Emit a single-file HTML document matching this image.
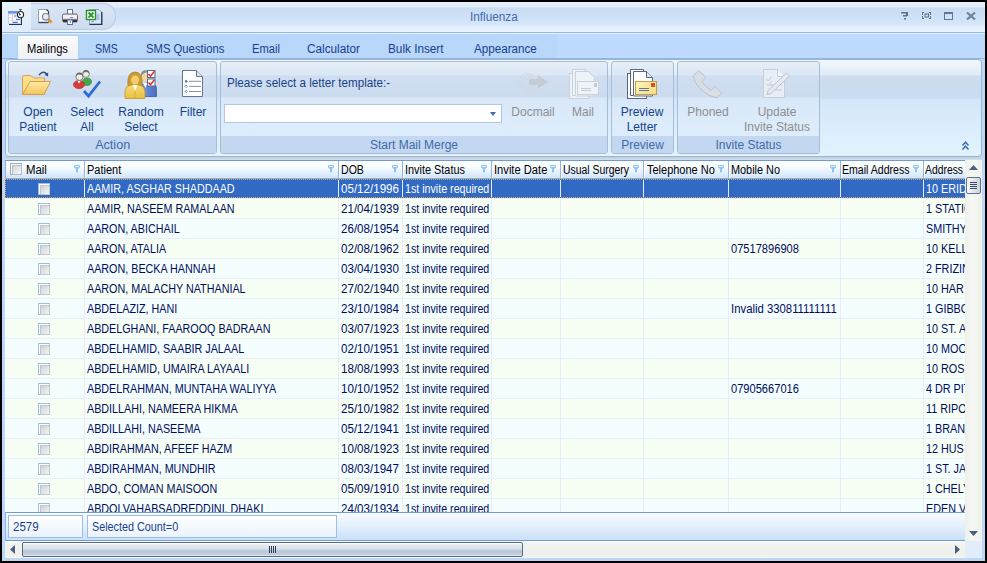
<!DOCTYPE html>
<html><head><meta charset="utf-8">
<style>
*{box-sizing:border-box;margin:0;padding:0}
html,body{width:987px;height:563px;overflow:hidden;background:#000;font-family:"Liberation Sans",sans-serif;position:relative}
.a{position:absolute}
#frame{left:2px;top:2px;width:983px;height:559px;background:#BFD7F6}
#title{left:2px;top:2px;width:983px;height:30px;background:linear-gradient(#E6F0FC 0,#E0ECFA 5px,#CADCF4 6px,#CEE0F7 14px,#D6E7FA 23px,#E0EEFD 24px,#E7F2FE 29px)}
#tline{left:2px;top:32px;width:983px;height:2px;border-top:1px solid #93B8E8;background:#E6F1FC}
#tabline{left:2px;top:58px;width:983px;height:1px;background:#8FB3E2}
#tabdark{left:2px;top:34px;width:555px;height:24px;background:#B9D6FB}
#ribshadow{left:5px;top:157px;width:977px;height:3px;background:linear-gradient(#BCCDE0,#D4E1EE)}
#appico{left:2px;top:2px;width:29px;height:30px;background:linear-gradient(#E9F2FC,#E0ECFA)}
#qat{left:31px;top:3px;width:85px;height:27px;border-radius:0 13px 13px 0;background:linear-gradient(#DBE6F4,#CEDCEF);border:1px solid #B6CBE8;border-left:none}
.tt{font-size:12px;line-height:12px;color:#3E6AAA;transform-origin:0 0;white-space:nowrap}
#tabs{left:2px;top:34px;width:983px;height:24px;background:#BEDBFF}
.tab{top:43px;font-size:12px;line-height:12px;color:#15428B;white-space:nowrap;transform-origin:0 0}
#tabsel{left:17px;top:35px;width:62px;height:24px;border:1px solid #B4D2F2;border-bottom:none;border-radius:2px 2px 0 0;background:linear-gradient(#FBFBFD,#F0F1F7)}
#ribbon{left:5px;top:59px;width:977px;height:98px;border:1px solid #9DB5D0;border-radius:4px;background:linear-gradient(#F2F7FD 0,#DFEBF7 15px,#CEDDEE 16px,#C9DCF1 38px,#D3E7FA 39px,#E2F3FF 94px)}
.grp{top:61px;height:93px;border:1px solid #A5BDD8;border-radius:3px;background:linear-gradient(#E6EFF9 0,#DBE7F5 13px,#CFDEF0 14px,#CCDCEF 35px,#D8E8F9 36px,#DEEDFB 74px)}
.glab{position:absolute;left:0;top:74px;width:100%;height:17px;background:#C3D8F0;font-size:12px;line-height:12px;color:#3E6AAA;text-align:center;padding-top:3px;white-space:nowrap}
.bt{top:105px;font-size:12px;line-height:15px;color:#15428B;text-align:center;white-space:nowrap}
.dis{color:#8E8E8E}
#combo{left:224px;top:104px;width:278px;height:19px;background:#fff;border:1px solid #B2C6E2}
#gridbg{left:5px;top:160px;width:977px;height:381px;background:#F4FEFF;border-top:1px solid #6F9BD1}
#hdr{left:5px;top:161px;width:960px;height:18px;background:linear-gradient(#FFFFFF 0,#F8FCFF 6px,#E6F2FE 11px,#CFE4FB 17px);border-bottom:1px solid #8DB3E6;border-left:1px solid #8DB3E6}
.hc{top:164px;font-size:12px;line-height:12px;transform-origin:0 0;color:#000;white-space:nowrap}
.hs{top:161px;width:2px;height:17px;border-left:1px solid #8FB4E2;background:#FFFFFF}
.flt{top:165px;width:8px;height:8px}
.cbh{width:12px;height:12px;border:1px solid #A2AAB6;background:#fff}
.cbh:after{content:"";position:absolute;left:1px;top:1px;width:8px;height:8px;border:1px solid #B8BEC8;background:linear-gradient(135deg,#D4D8DE,#F6F6F6)}
.row{left:5px;width:960px;height:20px;border-bottom:1px solid #E6EFFA}
.r0{background:#316AC5}
.ro{background:#F7FFF4}
.re{background:#F4FEFF}
.c{font-size:12px;line-height:12px;transform-origin:0 0;color:#000B5E;white-space:nowrap}
.w{color:#fff}
.vl{top:179px;width:1px;height:333px;background:#E4EDF9}
.cb{width:12px;height:12px;border:1px solid #A4BCDC;background:#fff}
.cb:after{content:"";position:absolute;left:1px;top:1px;width:8px;height:8px;border:1px solid #C2C6CE;background:linear-gradient(135deg,#CDD1D8,#F4F4F4)}
.focusv{width:1px;background:repeating-linear-gradient(180deg,#E3A33A 0 1px,#316AC5 1px 2px)}
.focus{height:1px;background:repeating-linear-gradient(90deg,#E3A33A 0 1px,#316AC5 1px 2px)}
#footer{left:5px;top:512px;width:960px;height:29px;border-top:1px solid #6F9BD1;border-bottom:1px solid #6F9BD1;border-left:1px solid #8DB3E6;background:linear-gradient(#F7FBFF 0,#E6F1FC 12px,#C9E1FA 27px)}
.fc{top:515px;height:23px;border:1px solid #9DBDE6;background:linear-gradient(#FFFFFF,#E9F3FD)}
.ft{font-size:12px;line-height:12px;color:#1A3F8F;white-space:nowrap;transform-origin:0 0}
#vs{left:965px;top:160px;width:17px;height:381px;background:linear-gradient(90deg,#ECEFEA,#F7F8F5 40%,#EDF0EB)}
#hs{left:5px;top:541px;width:960px;height:17px;background:linear-gradient(#FBFCFA 0,#F1F3EF 3px,#EDF0EB 14px,#F6F7F4 17px)}
#corner{left:965px;top:541px;width:17px;height:17px;background:#E1EDFB}
.thumbv{left:966px;top:177px;width:15px;height:17px;border:1px solid #5E7192;border-radius:2px;background:linear-gradient(90deg,#F8F9FA,#E3E7EB 50%,#C9D3DE)}
.thumbh{left:22px;top:542px;width:501px;height:15px;border:1px solid #566A8E;border-radius:2px;background:linear-gradient(#FFFFFF 0,#E6EAEE 2px,#D9E0E7 6px,#B7C6D8 8px,#C4D0DC 12px,#F2F4F6 13px)}

</style></head><body>
<div id="frame" class="a"></div>
<div id="title" class="a"></div>
<div id="tline" class="a"></div>
<div id="appico" class="a"></div>
<div id="qat" class="a"></div>
<div class="a tt" style="left:470px;top:11px;transform:scaleX(0.98)">Influenza</div>

<div id="tabs" class="a"></div>
<div id="tabdark" class="a"></div>
<div id="tabline" class="a"></div>
<div id="tabsel" class="a"></div>
<div class="a tab" style="left:27px;color:#000;transform:scaleX(0.93)">Mailings</div>
<div class="a tab" style="left:95px;transform:scaleX(0.88)">SMS</div>
<div class="a tab" style="left:146px;transform:scaleX(0.94)">SMS Questions</div>
<div class="a tab" style="left:252px;transform:scaleX(0.93)">Email</div>
<div class="a tab" style="left:307px;transform:scaleX(0.98)">Calculator</div>
<div class="a tab" style="left:388px;transform:scaleX(0.98)">Bulk Insert</div>
<div class="a tab" style="left:474px;transform:scaleX(0.97)">Appearance</div>

<div id="ribshadow" class="a"></div>
<div id="ribbon" class="a"></div>
<div class="a grp" style="left:8px;width:209px"><div class="glab"><span style="display:inline-block;transform:scaleX(1.05)">Action</span></div></div>
<div class="a grp" style="left:220px;width:388px"><div class="glab">Start Mail Merge</div></div>
<div class="a grp" style="left:611px;width:63px"><div class="glab">Preview</div></div>
<div class="a grp" style="left:677px;width:143px"><div class="glab">Invite Status</div></div>

<div class="a bt" style="left:8px;width:60px">Open<br>Patient</div>
<div class="a bt" style="left:57px;width:60px">Select<br>All</div>
<div class="a bt" style="left:111px;width:60px">Random<br>Select</div>
<div class="a bt" style="left:163px;width:60px">Filter</div>
<div class="a bt" style="left:227px;top:76px;transform:scaleX(0.97);transform-origin:0 0">Please select a letter template:-</div>
<div id="combo" class="a"><div class="a" style="left:265px;top:7px;width:0;height:0;border-left:3px solid transparent;border-right:3px solid transparent;border-top:4px solid #3D6CB0"></div></div>
<div class="a bt dis" style="left:503px;width:60px">Docmail</div>
<div class="a bt dis" style="left:553px;width:60px">Mail</div>
<div class="a bt" style="left:612px;width:60px">Preview<br>Letter</div>
<div class="a bt dis" style="left:678px;width:60px">Phoned</div>
<div class="a bt dis" style="left:737px;width:80px">Update<br>Invite Status</div>

<div id="gridbg" class="a"></div>
<div class="a" id="hdr"></div>
<div class="a hc" style="left:26px;top:164px;transform:scaleX(0.95);">Mail</div>
<div class="a flt" style="left:73px"><svg width="8" height="8" viewBox="0 0 8 8" style="display:block"><rect x="1" y="0" width="6" height="3" rx="1.2" fill="#8AC2F8"/><rect x="2" y="1" width="4" height="1" fill="#F4FAFF"/><path d="M2 3h4l-1 1.2v3h-2v-3z" fill="#8AC2F8"/></svg></div>
<div class="a hs" style="left:84px"></div>
<div class="a hc" style="left:87px;top:164px;transform:scaleX(0.917);">Patient</div>
<div class="a flt" style="left:327px"><svg width="8" height="8" viewBox="0 0 8 8" style="display:block"><rect x="1" y="0" width="6" height="3" rx="1.2" fill="#8AC2F8"/><rect x="2" y="1" width="4" height="1" fill="#F4FAFF"/><path d="M2 3h4l-1 1.2v3h-2v-3z" fill="#8AC2F8"/></svg></div>
<div class="a hs" style="left:338px"></div>
<div class="a hc" style="left:341px;top:164px;transform:scaleX(0.88);">DOB</div>
<div class="a flt" style="left:391px"><svg width="8" height="8" viewBox="0 0 8 8" style="display:block"><rect x="1" y="0" width="6" height="3" rx="1.2" fill="#8AC2F8"/><rect x="2" y="1" width="4" height="1" fill="#F4FAFF"/><path d="M2 3h4l-1 1.2v3h-2v-3z" fill="#8AC2F8"/></svg></div>
<div class="a hs" style="left:402px"></div>
<div class="a hc" style="left:405px;top:164px;transform:scaleX(0.908);">Invite Status</div>
<div class="a flt" style="left:480px"><svg width="8" height="8" viewBox="0 0 8 8" style="display:block"><rect x="1" y="0" width="6" height="3" rx="1.2" fill="#8AC2F8"/><rect x="2" y="1" width="4" height="1" fill="#F4FAFF"/><path d="M2 3h4l-1 1.2v3h-2v-3z" fill="#8AC2F8"/></svg></div>
<div class="a hs" style="left:491px"></div>
<div class="a hc" style="left:494px;top:164px;transform:scaleX(0.93);">Invite Date</div>
<div class="a flt" style="left:549px"><svg width="8" height="8" viewBox="0 0 8 8" style="display:block"><rect x="1" y="0" width="6" height="3" rx="1.2" fill="#8AC2F8"/><rect x="2" y="1" width="4" height="1" fill="#F4FAFF"/><path d="M2 3h4l-1 1.2v3h-2v-3z" fill="#8AC2F8"/></svg></div>
<div class="a hs" style="left:560px"></div>
<div class="a hc" style="left:563px;top:164px;transform:scaleX(0.867);">Usual Surgery</div>
<div class="a flt" style="left:632px"><svg width="8" height="8" viewBox="0 0 8 8" style="display:block"><rect x="1" y="0" width="6" height="3" rx="1.2" fill="#8AC2F8"/><rect x="2" y="1" width="4" height="1" fill="#F4FAFF"/><path d="M2 3h4l-1 1.2v3h-2v-3z" fill="#8AC2F8"/></svg></div>
<div class="a hs" style="left:643px"></div>
<div class="a hc" style="left:647px;top:164px;transform:scaleX(0.915);">Telephone No</div>
<div class="a flt" style="left:717px"><svg width="8" height="8" viewBox="0 0 8 8" style="display:block"><rect x="1" y="0" width="6" height="3" rx="1.2" fill="#8AC2F8"/><rect x="2" y="1" width="4" height="1" fill="#F4FAFF"/><path d="M2 3h4l-1 1.2v3h-2v-3z" fill="#8AC2F8"/></svg></div>
<div class="a hs" style="left:728px"></div>
<div class="a hc" style="left:731px;top:164px;transform:scaleX(0.906);">Mobile No</div>
<div class="a flt" style="left:829px"><svg width="8" height="8" viewBox="0 0 8 8" style="display:block"><rect x="1" y="0" width="6" height="3" rx="1.2" fill="#8AC2F8"/><rect x="2" y="1" width="4" height="1" fill="#F4FAFF"/><path d="M2 3h4l-1 1.2v3h-2v-3z" fill="#8AC2F8"/></svg></div>
<div class="a hs" style="left:840px"></div>
<div class="a hc" style="left:842px;top:164px;transform:scaleX(0.88);">Email Address</div>
<div class="a flt" style="left:912px"><svg width="8" height="8" viewBox="0 0 8 8" style="display:block"><rect x="1" y="0" width="6" height="3" rx="1.2" fill="#8AC2F8"/><rect x="2" y="1" width="4" height="1" fill="#F4FAFF"/><path d="M2 3h4l-1 1.2v3h-2v-3z" fill="#8AC2F8"/></svg></div>
<div class="a hs" style="left:923px"></div>
<div class="a hc" style="left:925px;top:164px;transform:scaleX(0.864);">Address</div>
<div class="a cbh" style="left:10px;top:163px"></div>
<div class="a row r0" style="top:179px"></div>
<div class="a cb" style="left:38px;top:183px"></div>
<div class="a c w" style="left:87px;top:183px;transform:scaleX(0.896);">AAMIR, ASGHAR SHADDAAD</div>
<div class="a c w" style="left:341px;top:183px;transform:scaleX(0.966);">05/12/1996</div>
<div class="a c w" style="left:405px;top:183px;transform:scaleX(0.89);">1st invite required</div>
<div class="a" style="left:926px;top:183px;width:39px;height:14px;overflow:hidden"><div class="c w" style="transform:scaleX(0.9)">10 ERIDGE</div></div>
<div class="a row ro" style="top:199px"></div>
<div class="a cb" style="left:38px;top:203px"></div>
<div class="a c" style="left:87px;top:203px;transform:scaleX(0.896);">AAMIR, NASEEM RAMALAAN</div>
<div class="a c" style="left:341px;top:203px;transform:scaleX(0.966);">21/04/1939</div>
<div class="a c" style="left:405px;top:203px;transform:scaleX(0.89);">1st invite required</div>
<div class="a" style="left:926px;top:203px;width:39px;height:14px;overflow:hidden"><div class="c" style="transform:scaleX(0.9)">1 STATION</div></div>
<div class="a row re" style="top:219px"></div>
<div class="a cb" style="left:38px;top:223px"></div>
<div class="a c" style="left:87px;top:223px;transform:scaleX(0.896);">AARON, ABICHAIL</div>
<div class="a c" style="left:341px;top:223px;transform:scaleX(0.966);">26/08/1954</div>
<div class="a c" style="left:405px;top:223px;transform:scaleX(0.89);">1st invite required</div>
<div class="a" style="left:926px;top:223px;width:39px;height:14px;overflow:hidden"><div class="c" style="transform:scaleX(0.9)">SMITHY</div></div>
<div class="a row ro" style="top:239px"></div>
<div class="a cb" style="left:38px;top:243px"></div>
<div class="a c" style="left:87px;top:243px;transform:scaleX(0.896);">AARON, ATALIA</div>
<div class="a c" style="left:341px;top:243px;transform:scaleX(0.966);">02/08/1962</div>
<div class="a c" style="left:405px;top:243px;transform:scaleX(0.89);">1st invite required</div>
<div class="a c" style="left:731px;top:243px;transform:scaleX(0.925);">07517896908</div>
<div class="a" style="left:926px;top:243px;width:39px;height:14px;overflow:hidden"><div class="c" style="transform:scaleX(0.9)">10 KELLY</div></div>
<div class="a row re" style="top:259px"></div>
<div class="a cb" style="left:38px;top:263px"></div>
<div class="a c" style="left:87px;top:263px;transform:scaleX(0.896);">AARON, BECKA HANNAH</div>
<div class="a c" style="left:341px;top:263px;transform:scaleX(0.966);">03/04/1930</div>
<div class="a c" style="left:405px;top:263px;transform:scaleX(0.89);">1st invite required</div>
<div class="a" style="left:926px;top:263px;width:39px;height:14px;overflow:hidden"><div class="c" style="transform:scaleX(0.9)">2 FRIZINGHALL</div></div>
<div class="a row ro" style="top:279px"></div>
<div class="a cb" style="left:38px;top:283px"></div>
<div class="a c" style="left:87px;top:283px;transform:scaleX(0.896);">AARON, MALACHY NATHANIAL</div>
<div class="a c" style="left:341px;top:283px;transform:scaleX(0.966);">27/02/1940</div>
<div class="a c" style="left:405px;top:283px;transform:scaleX(0.89);">1st invite required</div>
<div class="a" style="left:926px;top:283px;width:39px;height:14px;overflow:hidden"><div class="c" style="transform:scaleX(0.9)">10 HAR</div></div>
<div class="a row re" style="top:299px"></div>
<div class="a cb" style="left:38px;top:303px"></div>
<div class="a c" style="left:87px;top:303px;transform:scaleX(0.896);">ABDELAZIZ, HANI</div>
<div class="a c" style="left:341px;top:303px;transform:scaleX(0.966);">23/10/1984</div>
<div class="a c" style="left:405px;top:303px;transform:scaleX(0.89);">1st invite required</div>
<div class="a c" style="left:731px;top:303px;transform:scaleX(0.945);">Invalid 330811111111</div>
<div class="a" style="left:926px;top:303px;width:39px;height:14px;overflow:hidden"><div class="c" style="transform:scaleX(0.9)">1 GIBBON</div></div>
<div class="a row ro" style="top:319px"></div>
<div class="a cb" style="left:38px;top:323px"></div>
<div class="a c" style="left:87px;top:323px;transform:scaleX(0.896);">ABDELGHANI, FAAROOQ BADRAAN</div>
<div class="a c" style="left:341px;top:323px;transform:scaleX(0.966);">03/07/1923</div>
<div class="a c" style="left:405px;top:323px;transform:scaleX(0.89);">1st invite required</div>
<div class="a" style="left:926px;top:323px;width:39px;height:14px;overflow:hidden"><div class="c" style="transform:scaleX(0.9)">10 ST. ANNE</div></div>
<div class="a row re" style="top:339px"></div>
<div class="a cb" style="left:38px;top:343px"></div>
<div class="a c" style="left:87px;top:343px;transform:scaleX(0.896);">ABDELHAMID, SAABIR JALAAL</div>
<div class="a c" style="left:341px;top:343px;transform:scaleX(0.966);">02/10/1951</div>
<div class="a c" style="left:405px;top:343px;transform:scaleX(0.89);">1st invite required</div>
<div class="a" style="left:926px;top:343px;width:39px;height:14px;overflow:hidden"><div class="c" style="transform:scaleX(0.9)">10 MOOR</div></div>
<div class="a row ro" style="top:359px"></div>
<div class="a cb" style="left:38px;top:363px"></div>
<div class="a c" style="left:87px;top:363px;transform:scaleX(0.896);">ABDELHAMID, UMAIRA LAYAALI</div>
<div class="a c" style="left:341px;top:363px;transform:scaleX(0.966);">18/08/1993</div>
<div class="a c" style="left:405px;top:363px;transform:scaleX(0.89);">1st invite required</div>
<div class="a" style="left:926px;top:363px;width:39px;height:14px;overflow:hidden"><div class="c" style="transform:scaleX(0.9)">10 ROS</div></div>
<div class="a row re" style="top:379px"></div>
<div class="a cb" style="left:38px;top:383px"></div>
<div class="a c" style="left:87px;top:383px;transform:scaleX(0.896);">ABDELRAHMAN, MUNTAHA WALIYYA</div>
<div class="a c" style="left:341px;top:383px;transform:scaleX(0.966);">10/10/1952</div>
<div class="a c" style="left:405px;top:383px;transform:scaleX(0.89);">1st invite required</div>
<div class="a c" style="left:731px;top:383px;transform:scaleX(0.925);">07905667016</div>
<div class="a" style="left:926px;top:383px;width:39px;height:14px;overflow:hidden"><div class="c" style="transform:scaleX(0.9)">4 DR PIT</div></div>
<div class="a row ro" style="top:399px"></div>
<div class="a cb" style="left:38px;top:403px"></div>
<div class="a c" style="left:87px;top:403px;transform:scaleX(0.896);">ABDILLAHI, NAMEERA HIKMA</div>
<div class="a c" style="left:341px;top:403px;transform:scaleX(0.966);">25/10/1982</div>
<div class="a c" style="left:405px;top:403px;transform:scaleX(0.89);">1st invite required</div>
<div class="a" style="left:926px;top:403px;width:39px;height:14px;overflow:hidden"><div class="c" style="transform:scaleX(0.9)">11 RIPON</div></div>
<div class="a row re" style="top:419px"></div>
<div class="a cb" style="left:38px;top:423px"></div>
<div class="a c" style="left:87px;top:423px;transform:scaleX(0.896);">ABDILLAHI, NASEEMA</div>
<div class="a c" style="left:341px;top:423px;transform:scaleX(0.966);">05/12/1941</div>
<div class="a c" style="left:405px;top:423px;transform:scaleX(0.89);">1st invite required</div>
<div class="a" style="left:926px;top:423px;width:39px;height:14px;overflow:hidden"><div class="c" style="transform:scaleX(0.9)">1 BRANT</div></div>
<div class="a row ro" style="top:439px"></div>
<div class="a cb" style="left:38px;top:443px"></div>
<div class="a c" style="left:87px;top:443px;transform:scaleX(0.896);">ABDIRAHMAN, AFEEF HAZM</div>
<div class="a c" style="left:341px;top:443px;transform:scaleX(0.966);">10/08/1923</div>
<div class="a c" style="left:405px;top:443px;transform:scaleX(0.89);">1st invite required</div>
<div class="a" style="left:926px;top:443px;width:39px;height:14px;overflow:hidden"><div class="c" style="transform:scaleX(0.9)">12 HUS</div></div>
<div class="a row re" style="top:459px"></div>
<div class="a cb" style="left:38px;top:463px"></div>
<div class="a c" style="left:87px;top:463px;transform:scaleX(0.896);">ABDIRAHMAN, MUNDHIR</div>
<div class="a c" style="left:341px;top:463px;transform:scaleX(0.966);">08/03/1947</div>
<div class="a c" style="left:405px;top:463px;transform:scaleX(0.89);">1st invite required</div>
<div class="a" style="left:926px;top:463px;width:39px;height:14px;overflow:hidden"><div class="c" style="transform:scaleX(0.9)">1 ST. JAMES</div></div>
<div class="a row ro" style="top:479px"></div>
<div class="a cb" style="left:38px;top:483px"></div>
<div class="a c" style="left:87px;top:483px;transform:scaleX(0.896);">ABDO, COMAN MAISOON</div>
<div class="a c" style="left:341px;top:483px;transform:scaleX(0.966);">05/09/1910</div>
<div class="a c" style="left:405px;top:483px;transform:scaleX(0.89);">1st invite required</div>
<div class="a" style="left:926px;top:483px;width:39px;height:14px;overflow:hidden"><div class="c" style="transform:scaleX(0.9)">1 CHELYS</div></div>
<div class="a row re" style="top:499px"></div>
<div class="a cb" style="left:38px;top:503px"></div>
<div class="a c" style="left:87px;top:503px;transform:scaleX(0.896);">ABDOLVAHABSADREDDINI, DHAKI</div>
<div class="a c" style="left:341px;top:503px;transform:scaleX(0.966);">24/03/1934</div>
<div class="a c" style="left:405px;top:503px;transform:scaleX(0.89);">1st invite required</div>
<div class="a" style="left:926px;top:503px;width:39px;height:14px;overflow:hidden"><div class="c" style="transform:scaleX(0.9)">EDEN VALE</div></div>
<div class="a vl" style="left:84px"></div>
<div class="a vl" style="left:338px"></div>
<div class="a vl" style="left:402px"></div>
<div class="a vl" style="left:491px"></div>
<div class="a vl" style="left:560px"></div>
<div class="a vl" style="left:643px"></div>
<div class="a vl" style="left:728px"></div>
<div class="a vl" style="left:840px"></div>
<div class="a vl" style="left:923px"></div>
<div class="a focus" style="left:5px;top:179px;width:960px;"></div>
<div class="a focusv" style="left:5px;top:179px;height:19px;"></div>
<div class="a focus" style="left:5px;top:197px;width:960px;"></div>
<div id="footer" class="a"></div>
<div class="a fc" style="left:8px;width:75px"></div>
<div class="a fc" style="left:87px;width:250px"></div>
<div class="a ft" style="left:13px;top:521px;transform:scaleX(0.96)">2579</div>
<div class="a ft" style="left:92px;top:521px;transform:scaleX(0.9)">Selected Count=0</div>
<div id="vs" class="a"></div>
<div class="a thumbv"></div>
<div id="hs" class="a"></div>
<div class="a thumbh"></div>
<div id="corner" class="a"></div>
<svg class="a" style="left:4px;top:6px" width="24" height="22" viewBox="0 0 24 22">
 <rect x="5" y="6" width="13" height="13" fill="#24374F"/>
 <rect x="4" y="5" width="13" height="13" fill="#C9D3E3"/>
 <rect x="4" y="5" width="13" height="2.5" fill="#6C9BE6"/>
 <rect x="5" y="8.5" width="3" height="2.5" fill="#fff"/><rect x="9" y="8.5" width="7" height="2.5" fill="#fff"/>
 <rect x="5" y="11.5" width="3" height="2.5" fill="#fff"/><rect x="9" y="11.5" width="7" height="2.5" fill="#fff"/>
 <rect x="5" y="14.5" width="3" height="2.5" fill="#fff"/><rect x="9" y="14.5" width="7" height="2.5" fill="#fff"/>
 <rect x="10" y="9.5" width="2.5" height="1" fill="#B0489C"/><rect x="12" y="12.8" width="4" height="1.2" fill="#4C86E8"/><rect x="9" y="15.8" width="5" height="1.2" fill="#3A70D8"/>
 <path d="M15 3.5h3M16.5 3.5v2" stroke="#666" stroke-width="1"/>
 <circle cx="16.5" cy="8.6" r="3.1" fill="#fff" stroke="#222" stroke-width="1.1"/>
 <path d="M16.5 8.6L15.3 7.3L15.8 9.2Z" fill="#111" stroke="#111" stroke-width="0.8"/>
</svg>
<svg class="a" style="left:30px;top:4px" width="30" height="24" viewBox="0 0 30 24">
 <path d="M8.5 5.5h8l2 2v11h-10z" fill="#fff" stroke="#8EA2C4" stroke-width="1"/>
 <path d="M8.5 18.5h10" stroke="#34466A" stroke-width="1.4"/>
 <path d="M16.5 5.5l2 2v3" stroke="#34466A" stroke-width="1.2" fill="none"/>
 <path d="M18.5 15.5l3 3" stroke="#E8901E" stroke-width="2.6"/>
 <circle cx="15.8" cy="12.8" r="3.3" fill="#E4ECF6" stroke="#7D8694" stroke-width="1.2"/>
</svg>
<svg class="a" style="left:58px;top:4px" width="30" height="24" viewBox="0 0 30 24">
 <rect x="9.5" y="5.5" width="5" height="5" fill="#fff" stroke="#5A6F94" stroke-width="1"/>
 <rect x="4.5" y="10" width="15" height="8" rx="1.5" fill="#DCD6D8" stroke="#6B6D78" stroke-width="1"/>
 <rect x="5" y="11" width="14" height="3" fill="#F4F0F0"/>
 <rect x="5" y="15.5" width="14" height="2.5" fill="#3A3034"/>
 <rect x="12" y="13" width="3" height="1" fill="#4A9AF0"/>
 <rect x="9.5" y="16" width="5" height="4.5" fill="#fff" stroke="#5A6F94" stroke-width="1"/>
 <circle cx="12.3" cy="18" r="0.8" fill="#2A5CD8"/>
</svg>
<svg class="a" style="left:84px;top:4px" width="30" height="24" viewBox="0 0 30 24">
 <path d="M5.5 5.5h9.5l2.5 2.5v12.5h-12z" fill="#D8E6FA" stroke="#8CA6CC" stroke-width="1"/>
 <path d="M5.5 20.3h12.3V8" stroke="#223450" stroke-width="1.3" fill="none"/>
 <path d="M12.5 11h3M12.5 13h3M12.5 15h3M7 17.5h3" stroke="#8AA4CC" stroke-width="1"/>
 <rect x="2.5" y="6.5" width="9" height="9" fill="#fff" stroke="#2E8A2E" stroke-width="1.4"/>
 <path d="M4.5 8.5l5 5M9.5 8.5l-5 5" stroke="#2E9A38" stroke-width="2"/>
</svg>
<!-- window controls -->
<svg class="a" style="left:895px;top:6px" width="90" height="20" viewBox="0 0 90 20">
 <g fill="#5F6E82">
  <rect x="6" y="6" width="7" height="1.5"/><rect x="11" y="7" width="2" height="3"/><rect x="8" y="9" width="4" height="1.5"/><rect x="9" y="12" width="2" height="1.5"/>
 </g>
 <g fill="#5F6E82">
  <path d="M27 6h2v1h-1v2h-1zM36 6h-2v1h1v2h1zM27 13h2v-1h-1v-2h-1zM36 13h-2v-1h1v-2h1z"/>
  <rect x="30" y="8" width="3.5" height="3" fill="none" stroke="#5F6E82" stroke-width="1"/>
 </g>
 <rect x="49.5" y="6.5" width="8" height="7" fill="none" stroke="#657790" stroke-width="1"/>
 <rect x="49" y="6" width="9" height="2" fill="#657790"/>
 <path d="M72 6.5l8 7M80 6.5l-8 7" stroke="#6E8199" stroke-width="2.2"/>
</svg>
<!-- ribbon icons -->
<svg class="a" style="left:18px;top:66px" width="40" height="36" viewBox="0 0 40 36">
 <defs><linearGradient id="fo" x1="0" y1="0" x2="0" y2="1"><stop offset="0" stop-color="#FFEBA8"/><stop offset="1" stop-color="#F4C357"/></linearGradient></defs>
 <path d="M4.5 11q0-1.5 1.5-1.5h7l2.5 2.5h11v16.5h-22z" fill="#FBE08C" stroke="#D8A25A" stroke-width="1"/>
 <path d="M12 15.5h20.5l-6.5 13h-21.5z" fill="url(#fo)" stroke="#D89C4C" stroke-width="1"/>
 <path d="M21 9q4-5 8-1" stroke="#3B5278" stroke-width="1.5" fill="none"/>
 <path d="M26.5 8.8l3.5 1.6l0.3-3.8z" fill="#3B5278"/>
</svg>
<svg class="a" style="left:68px;top:66px" width="40" height="36" viewBox="0 0 40 36">
 <ellipse cx="19" cy="15.8" rx="4.6" ry="3.8" fill="#44A844" stroke="#2E8A30" stroke-width="0.6"/>
 <circle cx="18" cy="8" r="3.4" fill="#ECECE8" stroke="#7C7C7C" stroke-width="0.9"/>
 <path d="M14.6 8q0-4 3.4-4q3.4 0 3.4 4q-1-2-3.4-2q-2.4 0-3.4 2z" fill="#6E6E6E"/>
 <ellipse cx="11" cy="18.6" rx="5.6" ry="4" fill="#D63C3A" stroke="#B02828" stroke-width="0.6"/>
 <path d="M9.5 15l1.5 2.5l1.5-2.5z" fill="#fff"/>
 <circle cx="11.5" cy="10.8" r="3.6" fill="#ECECE8" stroke="#7C7C7C" stroke-width="0.9"/>
 <path d="M7.9 10.8q0-4.2 3.6-4.2q3.6 0 3.6 4.2q-1-2.2-3.6-2.2q-2.6 0-3.6 2.2z" fill="#6E6E6E"/>
 <path d="M16 25l4.5 5l11.5-14.5" stroke="#2C6CD8" stroke-width="2.8" fill="none"/>
</svg>
<svg class="a" style="left:122px;top:66px" width="40" height="36" viewBox="0 0 40 36">
 <defs><linearGradient id="bl" x1="0" y1="0" x2="1" y2="0"><stop offset="0" stop-color="#7A9AE0"/><stop offset="1" stop-color="#4A6CC0"/></linearGradient>
 <linearGradient id="yl" x1="0" y1="0" x2="0" y2="1"><stop offset="0" stop-color="#F8DC70"/><stop offset="1" stop-color="#E8C040"/></linearGradient></defs>
 <path d="M18.5 30.5v-7q0-6 6-6.5h4q6 .5 6 6.5v7z" fill="url(#bl)" stroke="#3E5CA0" stroke-width="0.8"/>
 <path d="M21 17l2.5 5l2-5z" fill="#fff"/>
 <ellipse cx="22.5" cy="11.5" rx="3.6" ry="4" fill="#F6D69A"/>
 <path d="M18.8 11q-.5-6.5 4.5-6.8q4 0 4.5 3.5q-2-1.5-4.5-1q-2.5 .5-4.5 4.3z" fill="#8C8C8C"/>
 <rect x="25.5" y="4.5" width="7.5" height="7" fill="#fff" stroke="#5A6C8C" stroke-width="1"/>
 <rect x="25.5" y="13" width="7.5" height="7" fill="#fff" stroke="#5A6C8C" stroke-width="1"/>
 <path d="M26.5 8l2 2.2l4-5M26.5 16.5l2 2.2l4-5" stroke="#E02A20" stroke-width="1.5" fill="none"/>
 <path d="M6 21q-1.5-15 7-15q8.5 0 7 15z" fill="#C99A38" stroke="#A87C28" stroke-width="0.7"/>
 <path d="M3 32.5v-6q0-7 7-7.5h6q7 .5 7 7.5v6z" fill="url(#yl)" stroke="#C09828" stroke-width="0.8"/>
 <path d="M10.5 19l2.5 6l2.5-6z" fill="#FAFAF2"/>
 <path d="M13 25v7" stroke="#D0A838" stroke-width="0.8"/>
 <ellipse cx="13" cy="14" rx="4" ry="4.6" fill="#F9CC66"/>
</svg>
<svg class="a" style="left:176px;top:66px" width="36" height="36" viewBox="0 0 36 36">
 <path d="M6.5 4.5h14l6 6v20h-20z" fill="#fff" stroke="#66788F" stroke-width="1"/>
 <path d="M20.5 4.5v6h6" fill="#D8E4F4" stroke="#66788F" stroke-width="1"/>
 <g fill="#fff" stroke="#66788F" stroke-width="0.9"><path d="M10.2 14l1.2 1.2l-1.2 1.2l-1.2-1.2z" fill="#66788F"/><path d="M10.2 19.2l1.2 1.2l-1.2 1.2l-1.2-1.2z"/><path d="M10.2 24.3l1.2 1.2l-1.2 1.2l-1.2-1.2z"/></g>
 <path d="M13 15.3h12M13 20.4h12M13 25.5h12" stroke="#8494AA" stroke-width="1"/>
</svg>
<svg class="a" style="left:514px;top:66px" width="40" height="36" viewBox="0 0 40 36">
 <g fill="none" stroke="#D2D9E2" stroke-width="1">
 <path d="M3.5 15.5l8-9l9 8.5l-8 14z"/><path d="M6.5 16.5l8-9.5l9 8.5l-7.5 14z"/><path d="M9.5 17.5l8-10l9 8.5l-8 14z"/>
 </g>
 <path d="M15 13h9v-3.5l10.5 6.5l-10.5 6.5v-3.5h-9z" fill="#C4CCD6"/>
</svg>
<svg class="a" style="left:566px;top:66px" width="36" height="36" viewBox="0 0 36 36">
 <g fill="#EEF3F8" stroke="#C9D1DB" stroke-width="1">
 <rect x="3.5" y="7.5" width="19" height="25"/><path d="M6.5 3.5h13v26h-13z"/><path d="M9.5 5.5h13l6 6v18.5h-19z"/>
 <rect x="11.5" y="15.5" width="21" height="13"/>
 </g>
 <rect x="28" y="17" width="3" height="4" fill="#C4CCD6"/>
 <path d="M15 22.5h10M15 24.5h10" stroke="#C4CCD6" stroke-width="1"/>
</svg>
<svg class="a" style="left:624px;top:66px" width="36" height="36" viewBox="0 0 36 36">
 <defs><linearGradient id="env" x1="0" y1="0" x2="1" y2="1"><stop offset="0" stop-color="#FFF4B8"/><stop offset="1" stop-color="#F6DC80"/></linearGradient></defs>
 <g fill="#fff" stroke="#56677E" stroke-width="1">
 <rect x="3.5" y="7.5" width="19" height="25"/><path d="M6.5 3.5h13v26h-13z"/><path d="M9.5 5.5h13l6 6v18.5h-19z"/>
 </g>
 <path d="M22.5 5.5v6h6" fill="#DCE6F4" stroke="#56677E" stroke-width="1"/>
 <rect x="11.5" y="15.5" width="21" height="13" fill="url(#env)" stroke="#C2A04A" stroke-width="1"/>
 <rect x="27" y="17" width="4" height="4" fill="#E24A2A"/>
 <path d="M15 22.5h10M15 24.5h10" stroke="#5C78A8" stroke-width="1"/>
</svg>
<svg class="a" style="left:690px;top:66px" width="36" height="36" viewBox="0 0 36 36">
 <path d="M8.5 4.5l7.5 7l-4 4q2.5 5 9 9l4-4l7 7l-5 4q-9 -1 -17 -9q-7 -8 -6.5 -13z" fill="#D9DEE5" stroke="#BAC2CD" stroke-width="1"/>
</svg>
<svg class="a" style="left:758px;top:66px" width="36" height="36" viewBox="0 0 36 36">
 <path d="M5.5 3.5h14l7 7v21h-21z" fill="#E8EEF5" stroke="#C6CED8" stroke-width="1"/>
 <path d="M19.5 3.5v7h7" fill="#F4F7FA" stroke="#C6CED8" stroke-width="1"/>
 <path d="M8.5 13l1.5 2l3.5-4.5M8.5 18l1.5 2l3.5-4.5M12 19h12M12 24h12" stroke="#C2CAD4" stroke-width="1" fill="none"/>
 <path d="M10 24.5l18.5-17.5l3 3l-18.5 17.5l-4 1z" fill="#E4E9EF" stroke="#BCC4CE" stroke-width="1"/>
</svg>
<!-- collapse chevron -->
<svg class="a" style="left:955px;top:136px" width="20" height="20" viewBox="0 0 20 20">
 <path d="M7.5 9.5l3-3.3l3 3.3M7.5 13.5l3-3.3l3 3.3" stroke="#3D6DB0" stroke-width="1.5" fill="none"/>
</svg>
<!-- scroll arrows -->
<svg class="a" style="left:965px;top:160px" width="17" height="381" viewBox="0 0 17 381">
 <path d="M4 10h9l-4.5-5z" fill="#4D5E80"/>
 <path d="M4 371h9l-4.5 5z" fill="#4D5E80"/>
</svg>
<svg class="a" style="left:5px;top:541px" width="960" height="17" viewBox="0 0 960 17">
 <path d="M5 8.5l5-4.5v9z" fill="#4D5E80"/>
 <path d="M950 4v9l5-4.5z" fill="#4D5E80"/>
 <path d="M264.5 5v7M266.5 5v7M268.5 5v7M270.5 5v7" stroke="#2E3A5C" stroke-width="1"/>
</svg>
<svg class="a" style="left:966px;top:177px" width="15" height="17" viewBox="0 0 15 17">
 <path d="M4 5.5h7M4 7.5h7M4 9.5h7M4 11.5h7" stroke="#3A4868" stroke-width="1"/>
</svg>

</body></html>
